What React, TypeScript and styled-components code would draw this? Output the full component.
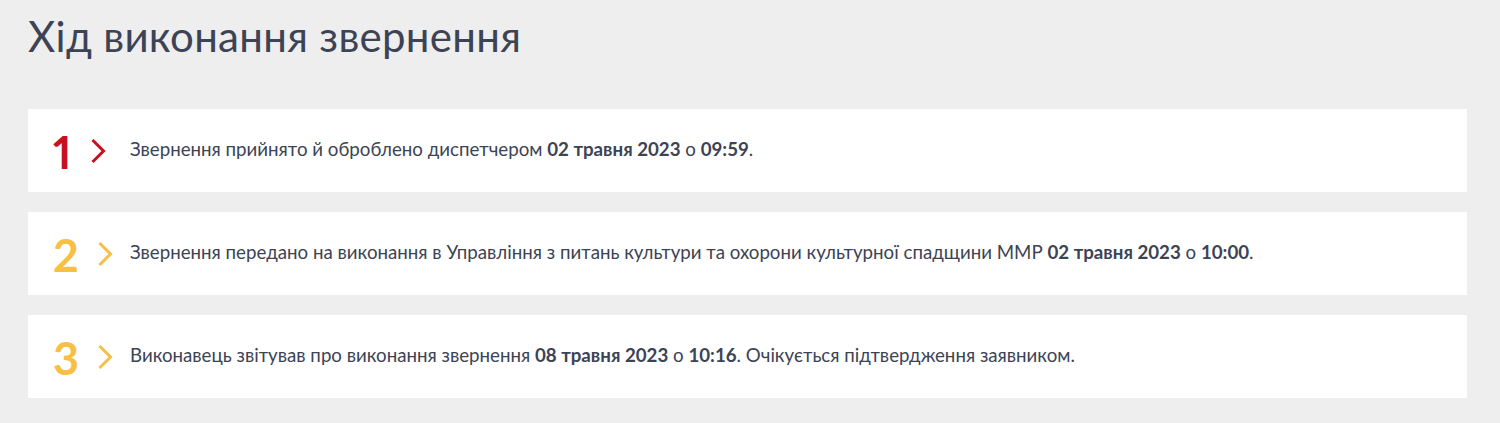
import React from "react";
import styled, { createGlobalStyle } from "styled-components";

const GlobalStyle = createGlobalStyle`
  html, body {
    margin: 0;
    padding: 0;
    background: #eeeeee;
  }
  body {
    font-family: Lato, "Noto Sans", sans-serif;
    color: #3c4354;
  }
`;

const Page = styled.div`
  padding: 12px 33px 26px 28px;
`;

const Title = styled.h1`
  margin: 0 0 49px 0;
  font-size: 42px;
  font-weight: 400;
  line-height: 48px;
  color: #3c4354;
  letter-spacing: 0.3px;
`;

const Steps = styled.div`
  display: flex;
  flex-direction: column;
  gap: 20px;
`;

const Card = styled.div`
  background: #fff;
  height: 83px;
  display: flex;
  align-items: center;
  padding-left: 25px;
`;

const Marker = styled.div`
  width: 77px;
  flex: none;
  display: flex;
  align-items: center;
`;

const Num = styled.span<{ color: string }>`
  font-size: 45px;
  font-weight: 700;
  color: ${(p) => p.color};
  line-height: 1;
  padding-top: 3px;
  font-variant-numeric: proportional-nums;
  font-feature-settings: "pnum" 1;
`;

const Arrow = styled.span`
  margin-left: 18px;
  display: flex;
  align-items: center;
`;

const Text = styled.p`
  margin: 0;
  font-size: 18.7px;
  line-height: 24px;
  color: #3c4354;
  padding-bottom: 3px;

  b {
    font-weight: 700;
  }
`;

const Chevron = ({ color }: { color: string }) => (
  <svg width="17" height="26" viewBox="0 0 17 26">
    <path d="M2.5 2 L13.5 13 L2.5 24" fill="none" stroke={color} strokeWidth="3" />
  </svg>
);

const RED = "#c8101e";
const YELLOW = "#f7bf44";

const steps = [
  {
    n: "1",
    color: RED,
    body: (
      <>
        Звернення прийнято й оброблено диспетчером <b>02 травня 2023</b> о <b>09:59</b>.
      </>
    ),
  },
  {
    n: "2",
    color: YELLOW,
    body: (
      <>
        Звернення передано на виконання в Управління з питань культури та охорони культурної спадщини ММР{" "}
        <b>02 травня 2023</b> о <b>10:00</b>.
      </>
    ),
  },
  {
    n: "3",
    color: YELLOW,
    body: (
      <>
        Виконавець звітував про виконання звернення <b>08 травня 2023</b> о <b>10:16</b>. Очікується підтвердження заявником.
      </>
    ),
  },
];

export default function App() {
  return (
    <>
      <GlobalStyle />
      <Page>
        <Title>Хід виконання звернення</Title>
        <Steps>
          {steps.map((s) => (
            <Card key={s.n}>
              <Marker>
                <Num color={s.color}>{s.n}</Num>
                <Arrow>
                  <Chevron color={s.color} />
                </Arrow>
              </Marker>
              <Text>{s.body}</Text>
            </Card>
          ))}
        </Steps>
      </Page>
    </>
  );
}
